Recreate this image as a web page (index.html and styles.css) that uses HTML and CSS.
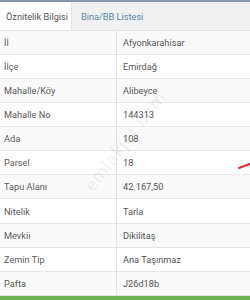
FILE: index.html
```html
<!DOCTYPE html>
<html lang="tr">
<head>
<meta charset="utf-8">
<link rel="stylesheet" href="styles.css">
</head>
<body>
<div class="page">
  <div class="topline"></div>
  <div class="tabs">
    <div class="tab active">Öznitelik Bilgisi</div>
    <div class="tab link">Bina/BB Listesi</div>
  </div>
  <div class="table">
    <div class="row"><div class="k">İl</div><div class="v">Afyonkarahisar</div></div>
    <div class="row"><div class="k">İlçe</div><div class="v">Emirdağ</div></div>
    <div class="row"><div class="k">Mahalle/Köy</div><div class="v">Alibeyce</div></div>
    <div class="row"><div class="k">Mahalle No</div><div class="v">144313</div></div>
    <div class="row"><div class="k">Ada</div><div class="v">108</div></div>
    <div class="row"><div class="k">Parsel</div><div class="v">18</div></div>
    <div class="row"><div class="k">Tapu Alanı</div><div class="v">42.167,50</div></div>
    <div class="row"><div class="k">Nitelik</div><div class="v">Tarla</div></div>
    <div class="row"><div class="k">Mevkii</div><div class="v">Dikilitaş</div></div>
    <div class="row"><div class="k">Zemin Tip</div><div class="v">Ana Taşınmaz</div></div>
    <div class="row"><div class="k">Pafta</div><div class="v">J26d18b</div></div>
  </div>
  <div class="greenbar"></div>
  <div class="watermark">emlakjet.com</div>
  <svg class="redmark" width="14" height="8" viewBox="0 0 14 8"><path d="M1 6 L5 4.5 L13 1.5" stroke="#d9302c" stroke-width="2" fill="none" stroke-linecap="round"/></svg>
</div>
</body>
</html>
```
FILE: styles.css
```css
html, body {
  margin: 0;
  padding: 0;
  background: #ffffff;
}
.page {
  position: relative;
  width: 250px;
  height: 300px;
  overflow: hidden;
  font-family: Roboto, "Liberation Sans", sans-serif;
  font-size: 9.2px;
  color: #5a5a5a;
}
.topline {
  height: 2px;
  background: #8796ab;
}
.tabs {
  display: flex;
  height: 28px;
  background: #f1f1f1;
}
.tab {
  display: flex;
  align-items: center;
  white-space: nowrap;
}
.tab.active {
  padding: 0 3px 0 6px;
  background: #ffffff;
  border-right: 1px solid #e2e2e2;
  color: #555;
}
.tab.link {
  color: #5585b5;
  padding-left: 9px;
}
.table {
  border-top: 1px solid #e3e3e3;
}
.row {
  display: grid;
  grid-template-columns: 117px 1fr;
  height: 23px;
  border-bottom: 1px solid #e6e6e6;
  background: #fafafa;
}
.row:nth-child(even) {
  background: #ffffff;
}
.row:nth-child(8) {
  height: 24px;
}
.k, .v {
  display: flex;
  align-items: center;
  padding-left: 4px;
}
.k {
  border-right: 1px solid #e3e3e3;
  color: #5a5a5a;
}
.v {
  padding-left: 6px;
  color: #555;
}
.greenbar {
  height: 6px;
  background: #6cb254;
}
.watermark {
  position: absolute;
  left: 66px;
  top: 133px;
  width: 116px;
  text-align: center;
  font-size: 18px;
  line-height: 20px;
  color: rgba(0, 0, 0, 0.08);
  transform: rotate(-52deg);
  white-space: nowrap;
  letter-spacing: 1px;
}
.redmark {
  position: absolute;
  left: 238px;
  top: 162px;
}
```
